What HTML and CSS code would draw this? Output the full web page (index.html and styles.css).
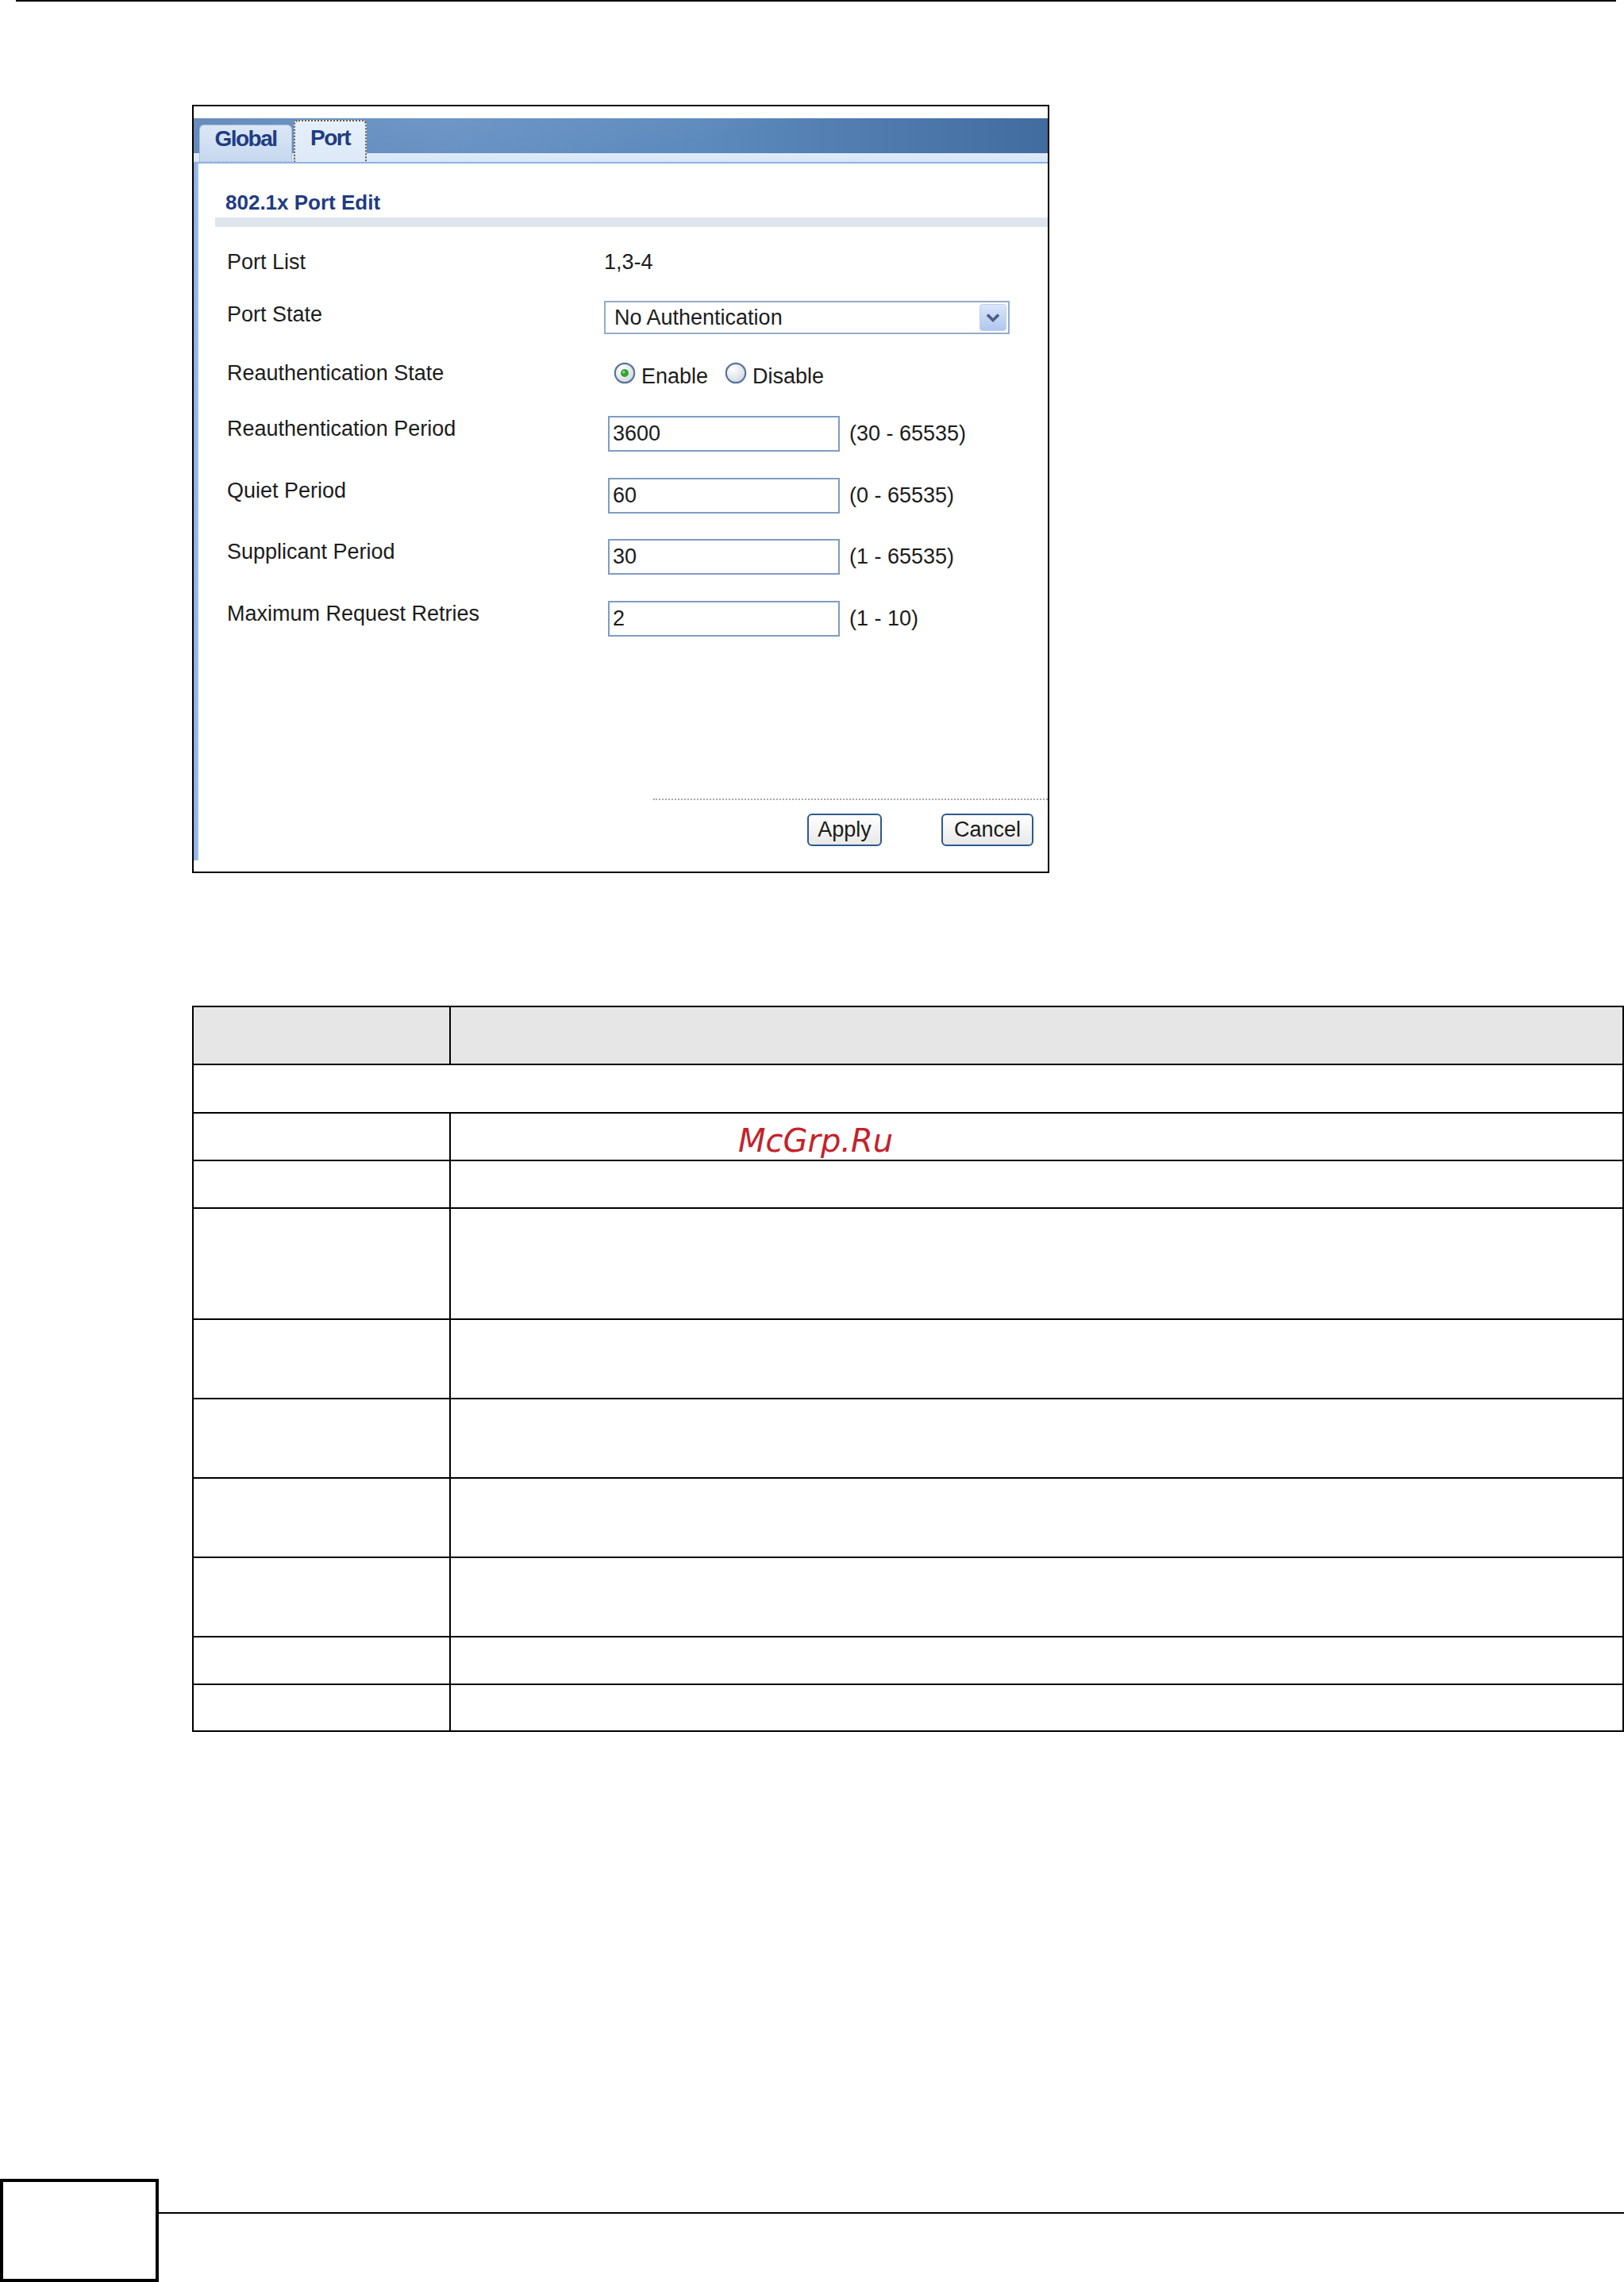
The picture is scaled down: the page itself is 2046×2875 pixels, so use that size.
FILE: index.html
```html
<!DOCTYPE html>
<html>
<head>
<meta charset="utf-8">
<title>802.1x Port Edit</title>
<link rel="stylesheet" href="styles.css">
</head>
<body>
<div class="page">
  <div class="top-rule"></div>

  <div class="frame">
    <div class="tabbar">
      <div class="tab tab-global">Global</div>
      <div class="tab tab-port">Port</div>
    </div>
    <div class="panel">
      <div class="heading">802.1x Port Edit</div>
      <div class="heading-bar"></div>
      <div class="form">
        <div class="row r1">
          <div class="label">Port List</div>
          <div class="value">1,3-4</div>
        </div>
        <div class="row r2">
          <div class="label up4">Port State</div>
          <div class="value">
            <div class="select">
              <span>No Authentication</span>
              <svg class="sel-arrow" width="34" height="34" viewBox="0 0 34 34">
                <defs>
                  <linearGradient id="ag" x1="0" y1="0" x2="0" y2="1">
                    <stop offset="0" stop-color="#dbe6fa"/>
                    <stop offset="1" stop-color="#aec6ee"/>
                  </linearGradient>
                </defs>
                <rect x="0.5" y="0.5" width="33" height="33" rx="3" fill="url(#ag)" stroke="#bfd1ee"/>
                <path d="M10 13.5 L17 20.5 L24 13.5" fill="none" stroke="#4b5e86" stroke-width="3.6" stroke-linejoin="miter"/>
              </svg>
            </div>
          </div>
        </div>
        <div class="row r3">
          <div class="label">Reauthentication State</div>
          <div class="value radios">
            <span class="radio-item">
              <svg class="radio" width="28" height="28" viewBox="0 0 28 28">
                <defs>
                  <radialGradient id="rg1" cx="0.35" cy="0.3" r="0.8">
                    <stop offset="0" stop-color="#ffffff"/>
                    <stop offset="1" stop-color="#cfd6e0"/>
                  </radialGradient>
                </defs>
                <circle cx="14" cy="14" r="12.2" fill="url(#rg1)" stroke="#5a7599" stroke-width="2.2"/>
                <circle cx="14" cy="14" r="5" fill="#36a336"/>
                <circle cx="12.8" cy="12.7" r="1.7" fill="#8fd88f"/>
              </svg>
              <span class="radio-text">Enable</span>
            </span>
            <span class="radio-item">
              <svg class="radio" width="28" height="28" viewBox="0 0 28 28">
                <defs>
                  <radialGradient id="rg2" cx="0.35" cy="0.3" r="0.8">
                    <stop offset="0" stop-color="#ffffff"/>
                    <stop offset="1" stop-color="#cfd6e0"/>
                  </radialGradient>
                </defs>
                <circle cx="14" cy="14" r="12.2" fill="url(#rg2)" stroke="#5a7599" stroke-width="2.2"/>
              </svg>
              <span class="radio-text">Disable</span>
            </span>
          </div>
        </div>
        <div class="row r4">
          <div class="label up6">Reauthentication Period</div>
          <div class="value"><div class="input">3600</div><span class="range">(30 - 65535)</span></div>
        </div>
        <div class="row r5">
          <div class="label up6">Quiet Period</div>
          <div class="value"><div class="input">60</div><span class="range">(0 - 65535)</span></div>
        </div>
        <div class="row r6">
          <div class="label up6">Supplicant Period</div>
          <div class="value"><div class="input">30</div><span class="range">(1 - 65535)</span></div>
        </div>
        <div class="row r7">
          <div class="label up6">Maximum Request Retries</div>
          <div class="value"><div class="input">2</div><span class="range">(1 - 10)</span></div>
        </div>
      </div>
      <div class="actions">
        <div class="dotted"></div>
        <div class="buttons">
          <div class="btn btn-apply">Apply</div>
          <div class="btn btn-cancel">Cancel</div>
        </div>
      </div>
    </div>
  </div>

  <div class="table-wrap">
    <table class="desc">
      <colgroup><col class="c1"><col class="c2"></colgroup>
      <tr class="h73 head"><td></td><td></td></tr>
      <tr class="h61"><td colspan="2"></td></tr>
      <tr class="h60"><td></td><td></td></tr>
      <tr class="h60"><td></td><td></td></tr>
      <tr class="h140"><td></td><td></td></tr>
      <tr class="h100"><td></td><td></td></tr>
      <tr class="h100"><td></td><td></td></tr>
      <tr class="h100"><td></td><td></td></tr>
      <tr class="h100"><td></td><td></td></tr>
      <tr class="h60"><td></td><td></td></tr>
      <tr class="h59"><td></td><td></td></tr>
    </table>
    <div class="watermark">McGrp.Ru</div>
  </div>

  <div class="footer">
    <div class="page-box"></div>
    <div class="footer-rule"></div>
  </div>
</div>
</body>
</html>
```

FILE: styles.css
```css
* { box-sizing: border-box; }

html, body {
  margin: 0;
  padding: 0;
  background: #ffffff;
}

body {
  width: 2046px;
  height: 2875px;
  overflow: hidden;
  font-family: "Liberation Sans", Arial, sans-serif;
  color: #1c1c1c;
}

.page {
  display: flex;
  flex-direction: column;
  height: 2875px;
}

.top-rule {
  height: 2px;
  background: #000;
  margin: 0 10px 0 20px;
}

/* ---------- screenshot frame ---------- */
.frame {
  margin: 130px 0 0 242px;
  width: 1080px;
  height: 968px;
  border: 2px solid #000;
  padding-top: 15px;
  display: flex;
  flex-direction: column;
  background: #fff;
}

.tabbar {
  height: 57px;
  display: flex;
  align-items: flex-end;
  padding-left: 7px;
  background:
    linear-gradient(170deg, rgba(255,255,255,0.10), rgba(255,255,255,0) 60%) 0 0 / 100% 44px no-repeat,
    linear-gradient(to right, #5881b6 0%, #6590c3 30%, #5d8abd 60%, #416c9f 100%) 0 0 / 100% 44px no-repeat,
    linear-gradient(to bottom, #e0ebfa, #d6e5f7) 0 44px / 100% 11px no-repeat,
    #8fb2e0;
}

.tab {
  margin-bottom: 2px;
  font-weight: bold;
  font-size: 28px;
  letter-spacing: -1.5px;
  line-height: 32px;
  color: #1e3d83;
  border-radius: 6px 6px 0 0;
  text-align: center;
}

.tab-global {
  width: 117px;
  height: 47px;
  padding-top: 1px;
  background: linear-gradient(to bottom, #dbe7f6, #c6d8ef);
  border: 1px solid #a6bfe0;
  border-bottom: 1px dotted #9aaecb;
}

.tab-port {
  width: 92px;
  height: 53px;
  margin-left: 2px;
  padding-top: 5px;
  background: linear-gradient(to bottom, #e6f0fb, #dde9f8);
  border: 2px dotted #6a5a40;
  border-bottom: none;
}

.panel {
  flex: 1;
  display: flex;
  flex-direction: column;
  background: linear-gradient(to right, #84aae2, #a8c5ef) 0 0 / 6px calc(100% - 14px) no-repeat;
}

.heading {
  margin: 34px 0 0 40px;
  font-weight: bold;
  font-size: 26px;
  line-height: 30px;
  color: #1f3c84;
}

.heading-bar {
  margin: 4px 0 0 27px;
  height: 12px;
  background: #dfe5ed;
}

/* ---------- form ---------- */
.form {
  padding-left: 42px;
}

.row {
  display: grid;
  grid-template-columns: 475px 1fr;
  align-items: center;
  height: 48px;
  font-size: 27px;
  line-height: 32px;
}

.r1 { margin-top: 20px; }
.r2 { margin-top: 22px; }
.r3 { margin-top: 22px; }
.r4 { margin-top: 28px; }
.r5 { margin-top: 30px; }
.r6 { margin-top: 29px; }
.r7 { margin-top: 30px; }

.label { color: #1c1c1c; }
.label.up4 { padding-bottom: 8px; }
.label.up6 { padding-bottom: 12px; }

.value {
  display: flex;
  align-items: center;
}

.select {
  width: 511px;
  height: 42px;
  border: 2px solid #93abcc;
  padding-left: 11px;
  padding-right: 2px;
  display: flex;
  align-items: center;
  justify-content: space-between;
  background: #fff;
}

.radios {
  padding-left: 12px;
  gap: 21px;
}

.radio-item {
  display: flex;
  align-items: center;
  gap: 7px;
}

.radio { display: block; }

.radio-text {
  padding-top: 8px;
}

.input {
  margin-left: 5px;
  width: 292px;
  height: 45px;
  border: 2px solid #7f9cc2;
  padding-left: 4px;
  line-height: 41px;
  background: #fff;
}

.range {
  margin-left: 12px;
}

/* ---------- actions ---------- */
.actions {
  margin-top: auto;
  margin-bottom: 32px;
}

.dotted {
  margin-left: 579px;
  border-top: 2px dotted #a8a8a8;
}

.buttons {
  margin-top: 17px;
  display: flex;
  justify-content: flex-end;
  gap: 75px;
  padding-right: 18px;
}

.btn {
  height: 41px;
  border: 2px solid #2c5a8e;
  border-radius: 6px;
  background: linear-gradient(to bottom, #ffffff, #e8e8e8);
  font-size: 27px;
  line-height: 37px;
  text-align: center;
  color: #1a1a1a;
}

.btn-apply { width: 94px; }
.btn-cancel { width: 116px; }

/* ---------- description table ---------- */
.table-wrap {
  position: relative;
  margin: 167px 0 0 242px;
  width: 1804px;
}

.desc {
  width: 100%;
  border-collapse: collapse;
  table-layout: fixed;
}

.desc td {
  border: 2px solid #000;
  padding: 0;
}

.desc col.c1 { width: 324px; }

.desc tr.head td { background: #e6e6e6; }

.h73 { height: 73px; }
.h61 { height: 61px; }
.h60 { height: 60px; }
.h59 { height: 59px; }
.h100 { height: 100px; }
.h140 { height: 140px; }

.watermark {
  position: absolute;
  left: 688px;
  top: 146px;
  font-family: "DejaVu Sans", "Liberation Sans", sans-serif;
  font-style: italic;
  font-size: 40px;
  line-height: 48px;
  color: #c4222b;
}

/* ---------- footer ---------- */
.footer {
  margin-top: auto;
  display: flex;
  height: 130px;
}

.page-box {
  width: 200px;
  height: 130px;
  border: 4px solid #000;
}

.footer-rule {
  flex: 1;
  height: 2px;
  margin-top: 42px;
  background: #000;
}
```
